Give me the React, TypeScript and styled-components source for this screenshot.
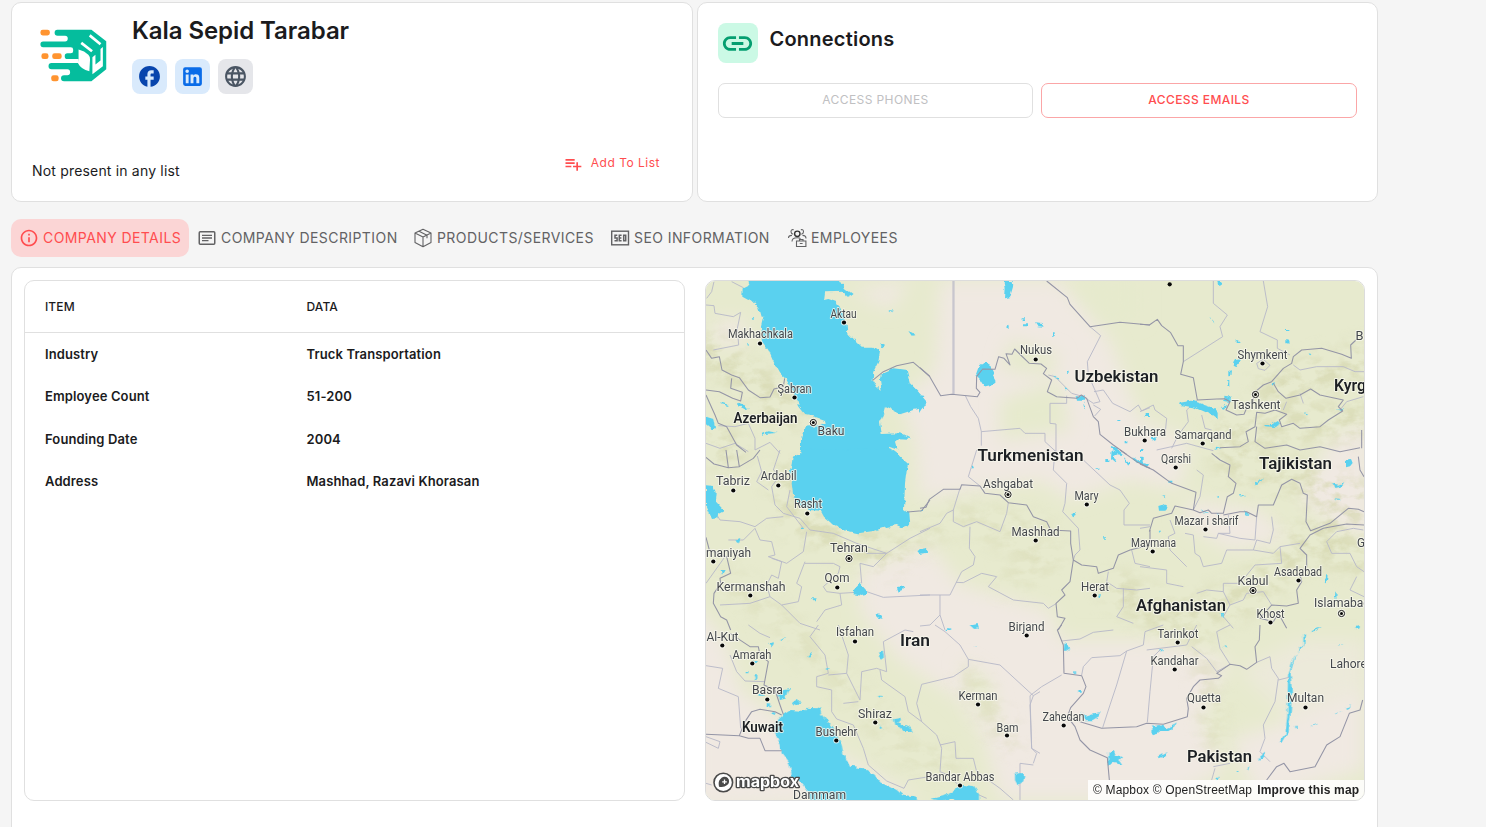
import React from 'react';
import styled, { createGlobalStyle } from 'styled-components';
import { MdFacebook, MdLanguage, MdLink, MdPlaylistAdd, MdInfoOutline } from 'react-icons/md';

const GlobalStyle = createGlobalStyle`
  *, *::before, *::after { box-sizing: border-box; }
  body { margin: 0; background: #f5f5f5; color: #1b1b1d; font-family: Inter, sans-serif; }
  button { font-family: inherit; }
`;

const Page = styled.main`
  height: 827px;
  overflow: hidden;
  padding: 2px 108px 0 11px;
  display: flex;
  flex-direction: column;
`;
const TopCards = styled.section`
  display: grid;
  grid-template-columns: 682px 681px;
  gap: 4px;
`;
const Card = styled.div`
  height: 200px;
  background: #fff;
  border: 1px solid #e0e0e0;
  border-radius: 10px;
  padding: 0 20px;
  display: flex;
  flex-direction: column;
`;
const Profile = styled.div`
  display: flex;
  padding-top: 12px;
  gap: 26px;
`;
const LogoBox = styled.div`
  width: 74px;
  padding: 14px 0 0 7.5px;
`;
const CompanyName = styled.h1`
  margin: 0;
  font-size: 24px;
  line-height: 32px;
  font-weight: 600;
  letter-spacing: -0.07px;
`;
const Socials = styled.div`
  display: flex;
  gap: 8px;
  margin-top: 12px;
`;
const Social = styled.a<{ $bg: string; $fg: string }>`
  width: 35px;
  height: 35px;
  border-radius: 8px;
  display: grid;
  place-items: center;
  background: ${p => p.$bg};
  color: ${p => p.$fg};
`;
const ListRow = styled.div`
  margin-top: auto;
  height: 50px;
  margin-bottom: 5px;
  display: flex;
  justify-content: space-between;
`;
const ListStatus = styled.span`
  font-size: 14px;
  line-height: 20px;
  letter-spacing: 0.18px;
  padding-top: 15px;
`;
const AddButton = styled.button`
  display: flex;
  align-items: center;
  gap: 8px;
  align-self: flex-start;
  height: 24px;
  margin-top: 4px;
  border: 0;
  padding: 0 12px 0 0;
  background: none;
  color: #ff4d4f;
  font-size: 12px;
  letter-spacing: 0.5px;
  svg { margin-top: 3px; }
`;
const ConnectionsHead = styled.div`
  display: flex;
  align-items: flex-start;
  gap: 11.5px;
  padding-top: 20px;
`;
const LinkBadge = styled.span`
  width: 40px;
  height: 40px;
  padding-right: 1px;
  border-radius: 8px;
  background: #cbf9e5;
  color: #059e70;
  display: grid;
  place-items: center;
`;
const CardTitle = styled.h2`
  margin: 0;
  font-size: 20px;
  line-height: 32px;
  font-weight: 600;
  letter-spacing: 0.22px;
`;
const AccessRow = styled.div`
  display: grid;
  grid-template-columns: 315px 316px;
  gap: 8px;
  margin-top: 20px;
`;
const AccessButton = styled.button<{ $active?: boolean }>`
  height: 35px;
  padding: 0 0 3px;
  border-radius: 7px;
  border: 1px solid ${p => (p.$active ? '#fba6a7' : '#e0e0e0')};
  background: #fff;
  color: ${p => (p.$active ? '#ff4d4f' : '#c0c0c2')};
  font-size: 12px;
  font-weight: ${p => (p.$active ? 500 : 400)};
  letter-spacing: 0.4px;
`;

const Tabs = styled.nav`
  display: flex;
  flex: none;
  margin: 17px 0 10px;
  height: 38px;
`;
const Tab = styled.button<{ $active?: boolean; $width: number }>`
  width: ${p => p.$width}px;
  display: flex;
  align-items: center;
  gap: 4px;
  padding: 0 0 1px 8px;
  border: 0;
  border-radius: 10px;
  white-space: nowrap;
  background: ${p => (p.$active ? '#fbd5d5' : 'transparent')};
  color: ${p => (p.$active ? '#ff4d4f' : '#626264')};
  font-size: 14px;
  letter-spacing: 0.42px;
  svg { flex: none; margin-top: 1px; }
`;

const Panel = styled.section`
  width: 1367px;
  height: 600px;
  flex: none;
  background: #fff;
  border: 1px solid #e0e0e0;
  border-radius: 10px;
  padding: 12px;
  display: flex;
  align-items: flex-start;
  gap: 20px;
`;
const TableCard = styled.div`
  width: 661px;
  height: 521px;
  border: 1px solid #e0e0e0;
  border-radius: 10px;
`;
const Table = styled.table`
  width: 100%;
  border-collapse: collapse;
  text-align: left;
  font-size: 13px;
  th { height: 51px; padding: 1px 0 0 20px; font-size: 12px; font-weight: 500; border-bottom: 1px solid #e0e0e0; letter-spacing: 0.1px; }
  td { height: 42.7px; padding: 0 0 0 20px; font-weight: 600; letter-spacing: 0.12px; }
  th:first-child { width: 261.5px; }
`;
const MapCard = styled.div`
  position: relative;
  width: 660px;
  height: 521px;
  border: 1px solid #dcdcdc;
  border-radius: 10px;
  overflow: hidden;
  svg { display: block; }
`;
const Attribution = styled.div`
  position: absolute;
  right: 0;
  bottom: 0;
  height: 20px;
  width: 276px;
  padding-left: 5px;
  background: rgba(255, 255, 255, 0.85);
  font: 12px/20px "Liberation Sans", Arial, sans-serif;
  color: #222;
  white-space: nowrap;
  display: flex;
  gap: 5px;
  letter-spacing: 0.17px;
`;

const Logo = () => (
  <svg width="67" height="53" viewBox="119 88 198 157">
    <path fill="#05bd9d" d="M170 90H271L315 124V207L271 243H190q-9 0-9-9t9-9h10q8 0 8-9t-8-9h-47q-9 0-9-9t9-9h80V177h-33q-8 0-8-8.500t8-8.500h10q7 0 7-7v-4q0-7-7-7H128q-8 0-8-8.500t8-8.500h65q8 0 8-8.500t-8-8.500h-22q-9 0-9-9t8-9z" />
    <path fill="#fff" d="M233 149q18 4 29 15 5 5 5 14l-2 35q-25-5-34-24l2-12zM274 172l9-8v29l15-12v-34l7-6v57l-31 24z" />
    <path stroke="#fff" strokeWidth="8" d="M241 129L273 154M266 107L298 133" />
    <g fill="#ff9430"><rect x="120" y="90" width="28" height="17" rx="7" /><rect x="123" y="160" width="21" height="17" rx="7" /><rect x="155" y="160" width="28" height="17" rx="7" /><rect x="152" y="225" width="22" height="18" rx="7" /></g>
  </svg>
);
const LinkedIn = () => (
  <svg width="25" height="25" viewBox="0 0 24 24" fill="currentColor"><path d="M19 3a2 2 0 0 1 2 2v14a2 2 0 0 1-2 2H5a2 2 0 0 1-2-2V5a2 2 0 0 1 2-2h14m-.5 15.5v-5.3a3.26 3.26 0 0 0-3.26-3.26c-.85 0-1.84.52-2.320 1.300v-1.110h-2.790v8.370h2.790v-4.930c0-.77.62-1.400 1.390-1.400a1.400 1.400 0 0 1 1.400 1.400v4.930h2.790M6.880 8.560a1.680 1.680 0 0 0 1.680-1.680c0-.93-.75-1.690-1.680-1.690a1.690 1.690 0 0 0-1.690 1.690c0 .93.76 1.680 1.690 1.680m1.390 9.940v-8.370H5.500v8.370h2.770z" /></svg>
);
const DescriptionIcon = () => (
  <svg width="20" height="20" viewBox="0 0 20 20" fill="none" stroke="currentColor" strokeWidth="1.500"><rect x="2.250" y="3.700" width="15.500" height="12.600" rx="1" /><path d="M5 7.300h10M5 10h10M5 12.700h6.500" strokeWidth="1.300" /></svg>
);
const BoxIcon = () => (
  <svg width="20" height="20" viewBox="0 0 20 20" fill="none" stroke="currentColor" strokeWidth="1.100" strokeLinejoin="round"><path d="M10 1.300L18 5v9.500l-8 4.200-8-4.200V5zM2 5l8 4 8-4M10 9v9.700M6 3.200l8 4v3" /></svg>
);
const SeoIcon = () => (
  <svg width="20" height="20" viewBox="0 0 20 20" fill="none" stroke="currentColor" strokeWidth="1.400"><rect x="1.700" y="3.200" width="16.800" height="13.600" /><path d="M7.300 7.200H5v2.700h2.100v2.900H4.500M11.600 7.200H9.300v5.600h2.300M9.300 10h2.100M13.700 7.200h2v5.600h-2z" strokeWidth="1.500" /></svg>
);
const EmployeesIcon = () => (
  <svg width="20" height="20" viewBox="0 0 20 20" fill="none" stroke="currentColor" strokeWidth="1.100"><circle cx="10.300" cy="5.800" r="2.700" stroke="#333" strokeWidth="1.400" /><path d="M6.700 1.800Q4 1 4 3.700q0 2 2.200 2.500M13.800 1.800q2.700-.8 2.700 1.900 0 2-2.200 2.500M1.500 10q0-2.600 3.500-2.600M15.500 7.400q3.500 0 3.500 3M5 13.500q0-3.800 5.200-3.800 2.500 0 3.300 1M9.500 13h9.400v5.500H9.500zM12.500 13v-1.500h3.500V13M12.800 15.500h2.800" /></svg>
);

interface Tile { x: number; y: number; water?: string; border?: string; admin?: string; }

/* Each sheet of map geometry is drawn at three units per pixel from its own origin. */
const tiles: Tile[] = [
  {
    x: 700, y: 275,
    water: 'M145 15L148 30 128 40 127 65 145 75 152 72 165 85 178 100 185 125 190 125 183 155 190 205 205 225 218 255 240 295 260 315 275 345 290 365 298 395 318 420 345 425 372 435 374 444 360 450 315 455 303 490 302 545 570 545 567 515 595 525 588 500 600 490 633 492 600 475 545 477 540 440 550 415 555 395 600 418 640 405 670 400 680 380 655 350 630 325 620 285 580 280 555 290 542 300 540 315 545 348 530 335 518 315 520 290 535 260 540 230 520 215 485 215 470 200 458 185 443 185 440 150 425 110 410 80 385 72 372 75 375 52 430 50 442 65 458 57 435 40 420 15ZM18 425l25 8 5 25-12 5-18-15ZM115 380l22 8 12 14-10 3-24-13zM65 383l20 6v4l-20-5zM186 476l20-7 28 5-40 3-8 6zM625 168l12 5 6 8-8 1zM540 205l16 8-10 7zM565 105l17 2-8 5zM155 125l8 4-5 4zM138 205l6 0-3 8z',
    border: 'M18 225L35 250 58 245 66 285 95 300 118 308 145 345 180 368 210 366 222 342 250 335 254 310M18 345L58 350 98 370 122 378 127 352 92 340 95 310M18 360L45 420 55 445 80 455 110 510 138 532M518 316L550 290 590 272 640 262 690 305',
    admin: 'M18 90L42 92 45 115 100 125 122 112 112 160 116 210 40 225M42 20L35 50 20 70M95 20L130 38M55 452L105 455 145 445 165 490 165 525 210 502 240 535M18 505L60 520 105 505 145 530'
  },
  {
    x: 920, y: 275,
    water: 'M250 18h28l2 14-10 34-18 4 2-30zM181 270l15-9 16 10 4 18 14 27-14 13-25 6-14-22-8-10zM348 142l16 2 7 11-15-1zM260 153l8-4 2 10zM305 130h10v6h-10zM306 148h18v6h-18zM396 175h5v10h-5zM438 287h8v6h-8zM400 298l18 15-3 4zM470 360l24 3-2 14-18 0zM490 385l8 18-6-3zM0 358l18 28-18 28zM575 515l18 8 20 18-28-4zM677 417h13v9h-13zM592 436h9v5h-9zM614 498h8v7h-8zM0 610zM434 340l10 4-8 2z',
    border: 'M0 278L28 303 62 362 95 358 172 365 180 352 169 340 170 305 188 282 225 283 236 245 252 250 270 270 258 236 276 238 284 222 302 240 328 265 363 267 380 280 370 296 395 315 382 350 410 365 470 370 484 360 500 370 520 425 535 440 540 478 580 510 620 538M380 18L442 68 450 88 510 155 600 142 690 150',
    admin: 'M99 18V358M102 18V358M136 362L152 395 175 430 184 470 184 512M184 470L300 460 315 475 375 475 375 500 408 530 408 447 390 445 390 385 440 385 440 362M510 155L542 182 502 260 505 300 540 380 520 385 490 365 455 355 405 305 385 300M522 350L550 345 578 385 630 410 655 390 665 408 690 398M520 390l22 13-18 20'
  },
  {
    x: 1140, y: 275,
    water: 'M115 384l40-7 65 22 13 14v20l-18-14-48-21-48-8zM285 252l15-4 2 8-12 20-12-3 2-12zM205 126l14 10 4 8-10-8zM232 18h12v10l-8 5zM290 196h8v8h-8zM438 162h10v6h-10zM439 192l8 2 2 12-10-1zM502 234l12 3-3 4zM265 288l8-2-2 18h-6zM262 315h6v20h-6zM253 365l20 3-2 13-18-3zM242 398l18-9-8 12zM395 325l10-3-3 10zM372 450l20 0 22-12 6 9-20 9-24-2zM18 418h12v8H18zM36 485l16 3-7 10-8-5zM495 412l10 5-6 4zM590 404l22-2-6 6zM0 522h10v6H0zM220 518l25 2-20 4z',
    border: 'M0 148L28 150 52 133 65 152 92 173 114 212 130 212 130 260 122 298 160 308 172 375 230 372 254 371 270 380 258 405 290 420 312 418 325 388 340 380 340 355 370 330 395 320 430 280 455 265 460 245 485 225 545 220 605 238 634 250 632 210 648 195M400 325L415 350 438 370 480 360 512 342 540 360 610 375 595 395 608 408 565 435 540 455 480 460 460 445 425 455 418 435 440 418 405 405 375 415 350 412 345 455 318 470 325 500 300 515 240 518M375 520L345 500 350 455M375 520L440 510 480 525 540 515 600 530 660 518M665 465L665 520',
    admin: 'M220 18V85L262 120 240 155 248 185 130 260M370 18L383 95 360 170 412 195 412 220 450 240M460 270l20 15 50-10 80 0 35 15 28 0M172 375L140 405 145 440 115 480 95 520M185 420L195 460 215 465M0 410L40 390 45 405 80 430 75 480M350 265l20-12 20 18-15 15-20-5zM440 380l-10 25M480 355l10 30M50 525l90-20 80 22M600 405l20-25 50-15'
  },
  {
    x: 700, y: 450,
    water: 'M302 0L300 12 278 20 275 40 270 62 280 75 275 100 280 140 298 165 330 180 362 182 372 200 400 225 440 243 475 250 520 243 560 230 590 225 610 235 628 228 625 190 612 180 615 100 620 60 625 42 605 25 590 10 570 -5ZM18 106l22 2 7 22-2 22 28 30-18 10-3 13-16 2-18-42zM480 400l18 20 0 15-15 3-23-5 2-14zM655 303l12-7 20 4-8 8-20 0zM590 410l22 0-2 10-14 5zM528 493l12 1 8 12-12-1zM108 268l10-4-4 14zM62 360l12 0-8 14zM335 445h12l-4 8zM303 233h8v4h-8z',
    border: 'M18 22L42 42 85 53 78 0M85 53L118 50 110 0M118 50L160 25 180 0M18 262L28 300 80 320 92 370 60 385 62 400 42 430 40 460 62 500 80 510 92 540M622 186L665 182 690 150',
    admin: 'M240 0L220 60 240 75 215 110 225 165 250 190 300 205 330 240 400 250 470 280 560 310 630 265 690 235M172 18L185 65 170 95 205 120M270 120L260 170 310 235M35 170L60 210 120 215 165 230 200 205 250 200M85 270L130 270 165 235 180 270 215 275 225 315 205 320 260 340 310 305 320 245M18 400L75 320M215 325L245 335 235 385 215 375 200 405 210 440 150 460 60 465M210 440L245 465 295 455 305 410 290 400 315 335M315 340L400 340 420 350 415 370 370 410 380 425 420 430 425 465 375 480 350 515M420 430L500 425 550 442 690 435M470 280L500 310 560 310 520 350 480 340 485 400M245 465L300 520 360 540'
  },
  {
    x: 920, y: 450,
    water: 'M0 298l20-4 7 8-8 6-19 4zM457 192l10-2 3 8-8 4zM153 47h8v8h-8zM535 434l8-2-6 13zM550 262h8v4h-8zM155 526l18-4 4 16-10-8zM575 0l16 15-10 5 10 20-18-15zM610 20l20 20-4 10zM640 18l25 20 20 5-5 10-30-15zM556 30h12v6h-12zM2 180h7v6H2zM530 55h8v4h-8z',
    border: 'M0 175L18 172 28 148 70 118 120 118 125 104 180 108 195 130 240 135 265 158 320 165 340 200 380 215 392 240 452 243 452 280 460 330 450 395 425 420 435 435 408 460 412 500 435 505 415 540M460 330L485 345 530 350 535 370 580 355 595 315 630 300 690 285 690 240M600 0L650 35 690 55',
    admin: 'M170 0L145 80 180 108M100 180L100 215 130 230 170 215 240 245 260 190 265 158M150 230L148 295 165 320 160 345 125 365 90 435 0 435M0 245L60 220 80 190 100 180 120 115M108 397L130 398 185 370 230 380 205 410 280 450 370 460 385 475 410 460M60 435L60 495 30 525 0 528M60 495L75 540M490 30L570 105 600 120 628 160 612 180 612 225 690 225M405 0L400 60 440 100 435 160 428 185 475 235 480 300 465 315 460 330M565 365L560 395 590 415 650 420 690 415M610 415L610 470 590 500 640 520M635 300L645 340 690 350'
  },
  {
    x: 1140, y: 450,
    water: 'M618 30l15-3 5 12-8 10-12 3zM572 103l20 4 18-7-8 10-16 4zM345 95l10 3 18-18-15 22-12 4zM55 168l12-4 16 8-10 10-16 0zM230 137l10-2-2 8zM300 139l18-2-16 6zM65 137h8l3 8zM85 92h12v6H85zM585 145l14 2-5 3zM562 376h4l-3 18-10 8zM586 425h4l-1 28-4-8zM53 242h10l-6 8zM242 492h7l-2 14zM0 20h8v20H0zM185 178l20 12-12-3zM230 188l12 8-8 2zM315 184l15 10-10 0zM530 535l10-4z',
    border: 'M0 42L40 60 95 100 168 127 160 180 180 188 205 180 215 190 250 190 262 140 280 130 288 100 265 80 270 45 240 30 215 10M0 225M28 245L40 205 95 190 105 168 160 180M250 195L300 185 320 185 350 200 355 165 400 165 425 105 455 88 480 100 490 130 502 135 498 215 512 242 570 220 625 175 655 178 672 185M672 225L620 222 550 235 510 255 480 295 500 315 500 350 480 375 485 395 470 420 475 460 440 468 395 465M395 465L360 505 400 515 415 490 440 535M655 20L660 60 672 80',
    admin: 'M0 350L80 360 80 400 130 410M90 210L105 250 85 260 90 300 140 350M135 250L160 255 165 310 180 320 190 350M190 260L230 265 235 250 270 250 265 195M235 250L300 265 345 270 350 200M190 350L245 340 260 300 340 300 350 270 390 280 400 240 395 200M340 300L400 310 420 290 480 280M420 290L425 340 345 345 300 400 250 400M170 430L200 420 250 425 250 400M250 425L270 465 310 450 320 430 370 425 395 465M270 465L250 500 280 535M0 235L30 230M160 180L180 140 190 75 170 60M560 275L590 245 640 235 670 240M560 275L575 310 630 310 650 350 672 365M650 380L630 420 672 440'
  },
  {
    x: 700, y: 625,
    water: 'M252 268L272 255 310 258 320 248 350 250 360 243 364 268 400 310 425 360 430 385 450 425 490 430 525 450 530 465 590 495 610 512 650 518 652 530H330L325 500 300 470 275 450 268 415 245 385 235 345 222 320 228 290ZM692 522l40-10 25-10 30-22 35 3 15 22v25H770L760 522l-40 4zM538 82l14-2 3 14-12 10-6-6zM945 446l20-2 8 8-5 22-15 6-8-14zM582 282l22-4 2 8-12 6 30 12 14 16-22 2-12-14-18-8zM538 298l12 12-10 2zM532 212h14l-4 8zM275 235l18-14 8 12-18 10zM250 192l22-3-10 12-6 20-20 5-2-20zM200 235h10v12h-10zM210 265l14-4 4 10zM175 210h18v5h-18zM205 55l18-8-10 18zM240 45l18-6-10 10zM322 92l14-15-6 18zM378 130h10v4h-10zM140 138h8v7h-8zM160 148h12v16h-6zM160 105l18 6-15 4zM812 0h15l8 10-10 2zM740 10h10v5h-10zM825 60h8v4h-8z',
    border: 'M90 25L150 65 175 65 180 90 205 110 192 180 225 195 240 240 250 268M18 328L118 332 145 340 180 340 195 377 245 377M118 332L135 290 155 260 180 253 225 260 245 270',
    admin: 'M18 122L68 130 55 190 115 215 122 310M90 90L110 140 135 168 195 170M18 335L60 350 55 370 18 352M18 475L35 480M145 0L180 25 210 38M355 0L330 35 375 90 385 145 350 155 350 185 395 195 395 260 410 282 460 300 490 370 505 420 560 468 612 490 625 465 720 450M415 0L445 90 440 145 385 150M440 145L480 225 485 140 530 130 560 140 550 50 615 15 640 20M430 235L475 230M540 135L545 165 615 215 625 260 665 290 710 330 725 370 720 440 745 450 780 485 860 520M805 103L805 125 760 155 665 178 650 235 665 290M805 103L900 120 1000 212 990 240 995 370 1020 385M705 0L735 20 780 60 805 103M1000 212L1020 200M720 360L765 350 768 400 820 400 830 440 900 490 940 525M960 525L960 415 1000 420'
  },
  {
    x: 1030, y: 625,
    water: 'M103 55l10 4 8 10-12 8-8 0zM132 136h6v12h-6zM145 195h10v8h-10zM150 262l20 10 25-8 16-2-4 12-20 12-22 0zM367 304l25-4 15 10 20-8 10-14-3 15-18 15-26 0-5 8-18 5zM235 385l15-8 8 12 18 8-8 8 10 14-30-5-14 7zM386 395l26-14-6 12-18 7zM820 30l8-2-2 30-14 6-18 35-12 45 4 60-4 65-6 50-18 30-12 3 20-25 6-55 2-120 18-55 28-35zM845 18l20-8 10 0-28 12zM580 62l8-2 0 8zM390 75l10-3-5 8zM690 395l18-14-6 16-18 8zM650 428l8-4-4 14zM560 455h8v10h-8zM620 435h5v6h-5zM793 302h4v8h-4zM845 303l25-9-20 10zM915 266l20-8-16 10zM945 248l22-8-18 12zM925 60l12-3-10 6zM972 8l12-5 4 8-12 2z',
    border: 'M95 0L82 15 100 60 102 145 155 152 168 185 160 205 122 248 112 275 135 305 150 345 180 375 232 398 238 465M112 275L155 292 215 310 320 305 350 295 400 298 472 275 475 250 470 220 490 185 510 165 565 160 575 152 560 145 600 118 630 122 650 133 680 112 675 65 688 45 690 0M710 465L740 425 762 415 780 440 855 425 890 360 930 335 958 265 990 255 998 225',
    admin: 'M95 48L150 42 190 22 250 15M95 150L35 185 0 212M155 150L160 125 185 98 270 92 290 78 340 60 345 20 400 0M290 78L260 180 240 240 218 308M390 75L370 95 360 200 352 292M485 65L530 100 560 140 600 118 570 70 560 20 600 0M680 112L720 95 725 130 745 160 735 230 700 300 705 340 690 380 720 410M745 165L785 155M0 212L5 370 20 385 10 415M350 75L470 60 500 0M550 425L600 415M545 465L555 430'
  }
];

type Kind = 'country' | 'city' | 'capital';
interface Place { name: string; x: number; y: number; w: number; size?: number; kind?: Kind; dot?: [number, number]; }
const places: Place[] = [
  { name: 'Aktau', x: 843.5, y: 318, w: 26, dot: [844, 322.5] },
  { name: 'Makhachkala', x: 760.5, y: 338, w: 65, dot: [760, 343.5] },
  { name: 'Şabran', x: 794.5, y: 393, w: 34, dot: [794.5, 397.5] },
  { name: 'Azerbaijan', x: 765.5, y: 422.500, w: 64, size: 14, kind: 'country' },
  { name: 'Baku', x: 831, y: 435, w: 27, size: 12.5, kind: 'capital', dot: [813.300, 422.500] },
  { name: 'Nukus', x: 1036, y: 354, w: 32, dot: [1035.700, 359.500] },
  { name: 'Uzbekistan', x: 1116.500, y: 382, w: 84, size: 17, kind: 'country' },
  { name: 'Shymkent', x: 1262.500, y: 358.500, w: 50, dot: [1262.500, 363.500] },
  { name: 'Kyrg', x: 1350, y: 391, w: 32, size: 17, kind: 'country' },
  { name: 'B', x: 1359.500, y: 340, w: 8 },
  { name: 'Tashkent', x: 1256, y: 409, w: 49, size: 12.500, kind: 'capital', dot: [1255.500, 394.500] },
  { name: 'Bukhara', x: 1145, y: 435.500, w: 42, dot: [1144.700, 440.500] },
  { name: 'Samarqand', x: 1203, y: 438.500, w: 57, dot: [1202.700, 443.500] },
  { name: 'Turkmenistan', x: 1030.500, y: 461, w: 106, size: 17, kind: 'country' },
  { name: 'Qarshi', x: 1176, y: 463, w: 30, dot: [1175.700, 467.500] },
  { name: 'Tajikistan', x: 1295.500, y: 469, w: 73, size: 17, kind: 'country' },
  { name: 'Tabriz', x: 733, y: 484.500, w: 34, dot: [733.300, 490.500] },
  { name: 'Ardabil', x: 778.500, y: 480, w: 36, dot: [778.300, 485.500] },
  { name: 'Rasht', x: 808, y: 508, w: 28, dot: [807.300, 513.500] },
  { name: 'Ashgabat', x: 1008, y: 487.500, w: 50, size: 12.500, kind: 'capital', dot: [1008, 494.500] },
  { name: 'Mary', x: 1086.500, y: 499.500, w: 24, dot: [1086.800, 504.500] },
  { name: 'Mazar i sharif', x: 1206.500, y: 524.500, w: 64, dot: [1205.500, 529.500] },
  { name: 'Mashhad', x: 1035.500, y: 535.500, w: 48, size: 12.500, dot: [1035.700, 540.500] },
  { name: 'Maymana', x: 1153.500, y: 547, w: 45, dot: [1152.700, 551.500] },
  { name: 'Tehran', x: 849, y: 552, w: 38, size: 12.500, kind: 'capital', dot: [849, 558.500] },
  { name: 'maniyah', x: 728.500, y: 556.500, w: 45, dot: [713.300, 561.500] },
  { name: 'Kermanshah', x: 751, y: 590.500, w: 69, size: 12.500, dot: [750.300, 595.500] },
  { name: 'Qom', x: 837, y: 581.500, w: 25, size: 12.500, dot: [837.300, 587.500] },
  { name: 'Herat', x: 1095, y: 590.500, w: 28, dot: [1094.700, 595.500] },
  { name: 'Asadabad', x: 1298, y: 576, w: 48, dot: [1298.500, 580.500] },
  { name: 'Kabul', x: 1253, y: 584.500, w: 31, size: 12.500, kind: 'capital', dot: [1253, 590.500] },
  { name: 'G', x: 1361, y: 546.500, w: 8 },
  { name: 'Afghanistan', x: 1181, y: 611, w: 90, size: 17, kind: 'country' },
  { name: 'Islamabad', x: 1342, y: 607, w: 56, size: 12.500, kind: 'capital', dot: [1341.500, 613.500] },
  { name: 'Khost', x: 1270.500, y: 618, w: 28, dot: [1270.500, 622.500] },
  { name: 'Al-Kut', x: 722.500, y: 641, w: 32, dot: [722.300, 645.500] },
  { name: 'Isfahan', x: 855, y: 635.500, w: 38, size: 12.500, dot: [855, 641.500] },
  { name: 'Iran', x: 915, y: 645.500, w: 30, size: 17, kind: 'country' },
  { name: 'Birjand', x: 1026.500, y: 631, w: 36, dot: [1026.700, 635.500] },
  { name: 'Tarinkot', x: 1178, y: 637.500, w: 41, dot: [1177.700, 642.500] },
  { name: 'Amarah', x: 752, y: 658.500, w: 39, dot: [752.300, 663.500] },
  { name: 'Kandahar', x: 1174.500, y: 664.500, w: 48, dot: [1174.700, 669.500] },
  { name: 'Lahore', x: 1348.500, y: 668, w: 37, size: 12.500 },
  { name: 'Basra', x: 767.500, y: 694, w: 31, size: 12.500, dot: [767.300, 699.500] },
  { name: 'Kerman', x: 978, y: 700, w: 39, dot: [978, 704.500] },
  { name: 'Quetta', x: 1204, y: 702, w: 34, size: 12.500, dot: [1203.500, 707.500] },
  { name: 'Multan', x: 1305.500, y: 702, w: 37, size: 12.500, dot: [1305.500, 707.500] },
  { name: 'Shiraz', x: 875, y: 717.500, w: 34, size: 12.500, dot: [875.300, 722.500] },
  { name: 'Kuwait', x: 762.500, y: 731.500, w: 41, size: 14, kind: 'country' },
  { name: 'Zahedan', x: 1063.500, y: 721, w: 42, dot: [1063.700, 725.500] },
  { name: 'Bushehr', x: 836.500, y: 735.500, w: 42, dot: [836.300, 740.500] },
  { name: 'Bam', x: 1007.500, y: 731.500, w: 22, dot: [1007, 735.500] },
  { name: 'Pakistan', x: 1219.500, y: 761.500, w: 65, size: 17, kind: 'country' },
  { name: 'Bandar Abbas', x: 960, y: 780.500, w: 69, dot: [960, 785.500] },
  { name: 'Dammam', x: 819.500, y: 799, w: 53, size: 12.500 }
];

const PlaceLabel = styled.text<{ $country: boolean; $size: number }>`
  font-family: Roboto, sans-serif;
  font-size: ${p => p.$size}px;
  font-weight: ${p => (p.$country ? 600 : 400)};
  fill: ${p => (p.$country ? '#1d2024' : '#44474c')};
  stroke: rgba(247, 247, 237, 0.8);
  stroke-width: 2px;
  stroke-linejoin: round;
  paint-order: stroke;
  text-anchor: middle;
`;

const PlaceMark = ({ place }: { place: Place }) => (
  <g>
    {place.dot && (
      <>
        <circle cx={place.dot[0]} cy={place.dot[1]} r={place.kind === 'capital' ? 4.500 : 3} fill="#f7f7f0" opacity="0.800" />
        {place.kind === 'capital' && <circle cx={place.dot[0]} cy={place.dot[1]} r="3.100" fill="none" stroke="#1b1b1b" strokeWidth="1" />}
        <circle cx={place.dot[0]} cy={place.dot[1]} r={place.kind === 'capital' ? 1.500 : 2.100} fill="#080808" />
      </>
    )}
    <PlaceLabel $country={place.kind === 'country'} $size={place.size ?? 12} x={place.x} y={place.y} textLength={place.w} lengthAdjust="spacingAndGlyphs">{place.name}</PlaceLabel>
  </g>
);

const RegionMap = () => (
  <svg width="658" height="519" viewBox="706 281 658 519">
    <defs>
      <filter id="cover" x="-20%" y="-20%" width="140%" height="140%"><feGaussianBlur stdDeviation="9" /></filter>
      <filter id="relief" x="0" y="0" width="100%" height="100%">
        <feTurbulence type="fractalNoise" baseFrequency="0.05 0.08" numOctaves="4" seed="8" />
        <feColorMatrix values="0 0 0 0 0.66  0 0 0 0 0.67  0 0 0 0 0.42  3.800 0 0 0 -1.600" />
      </filter>
      <filter id="coast" filterUnits="userSpaceOnUse" x="700" y="275" width="670" height="531" colorInterpolationFilters="sRGB">
        <feTurbulence type="fractalNoise" baseFrequency="0.16" numOctaves="2" seed="3" result="noise" />
        <feDisplacementMap in="SourceGraphic" in2="noise" scale="5" xChannelSelector="R" yChannelSelector="G" />
      </filter>
      <mask id="ranges">
        <g filter="url(#cover)" fill="none" stroke="#fff" strokeLinecap="round">
          <path strokeWidth="34" d="M706 350L760 385 790 410M706 440L730 450M785 480L800 520 845 540 890 555M1270 390L1364 360M1230 430L1364 420M1230 460L1364 500 1240 600 1170 620 1120 590M1300 540L1364 560" />
          <path strokeWidth="22" opacity=".65" d="M730 580L780 620 850 690 900 750 950 765M890 555L960 515 1050 560 1010 580M970 680L1010 740M1200 640L1215 740M960 515L1040 530" />
        </g>
      </mask>
    </defs>
    <rect x="705" y="280" width="660" height="521" fill="#e7eace" />
    <g fill="#f0e9e2" filter="url(#cover)">
      <path d="M940 280L1060 280 1110 340 1140 420 1190 440 1180 490 1130 480 1070 500 1040 480 920 500 915 440 900 400 935 370z" />
      <path d="M860 570L930 545 960 585 1050 610 1060 640 1150 640 1230 660 1200 720 1225 770 1170 800 1000 800 985 740 960 700 900 660 860 610z" />
      <path d="M690 600L725 640 740 690 780 720 850 760 920 800 690 810z" />
      <path d="M1290 720L1364 690 1364 770 1260 800 1230 740zM1330 440L1370 420 1370 540 1330 520 1300 500zM1190 500L1260 510 1290 540 1230 550 1180 520zM715 320L745 320 745 345 715 345zM850 290L910 280 890 310z" />
      <path opacity=".6" d="M1240 670L1300 640 1364 640 1364 690 1290 720z" />
    </g>
    <g fill="#e6eacd" filter="url(#cover)">
      <path d="M1000 400L1060 380 1070 430 1000 440zM1010 340L1060 355 1050 375 1000 370zM960 660L990 680 1000 730 975 710z" />
      <path d="M1075 280L1140 280 1140 320 1110 320z" />
    </g>
    <g mask="url(#ranges)"><rect x="705" y="280" width="660" height="521" filter="url(#relief)" opacity=".68" /></g>
    {tiles.map(t => (
      <g key={`a${t.x}-${t.y}`} transform={`translate(${t.x} ${t.y}) scale(0.333333)`} fill="none" strokeLinejoin="round">
        <path d={t.admin} stroke="#b8b9c8" strokeWidth="2.800" />
      </g>
    ))}
    <g filter="url(#coast)">
      {tiles.map(t => (
        <g key={`w${t.x}-${t.y}`} transform={`translate(${t.x} ${t.y}) scale(0.333333)`}>
          <path d={t.water} fill="#5ad1ef" />
        </g>
      ))}
    </g>
    {tiles.map(t => (
      <g key={`b${t.x}-${t.y}`} transform={`translate(${t.x} ${t.y}) scale(0.333333)`} fill="none" strokeLinejoin="round">
        <path d={t.border} stroke="#9495a6" strokeWidth="3.200" />
      </g>
    ))}
    <circle cx="1169.700" cy="284.300" r="2.100" fill="#080808" />
    {places.map(p => <PlaceMark key={p.name} place={p} />)}
    <g>
      <circle cx="723.300" cy="782.500" r="9.300" fill="#fff" stroke="#4a4a4a" strokeWidth="1.600" />
      <path d="M719 786.800q-1.200-5.500 1.500-7.800a4.600 4.600 0 1 1 6.200 6.300q-2.200 2.300-7.700 1.500z" fill="#4a4a4a" />
      <path d="M724.500 779.500v4.600M722.200 781.800h4.600" stroke="#fff" strokeWidth="1.300" />
      <text x="736" y="787" textLength="63" lengthAdjust="spacingAndGlyphs" fontFamily="Inter, sans-serif" fontSize="15" fontWeight="700" fill="#fff" stroke="#4a4a4a" strokeWidth="2.600" strokeLinejoin="round" paintOrder="stroke">mapbox</text>
    </g>
  </svg>
);

const details = [
  ['Industry', 'Truck Transportation'],
  ['Employee Count', '51-200'],
  ['Founding Date', '2004'],
  ['Address', 'Mashhad, Razavi Khorasan']
];

export default function App() {
  return (
    <>
      <GlobalStyle />
      <Page>
        <TopCards>
          <Card>
            <Profile>
              <LogoBox><Logo /></LogoBox>
              <div>
                <CompanyName>Kala Sepid Tarabar</CompanyName>
                <Socials>
                  <Social $bg="#d9eafc" $fg="#0845ad"><MdFacebook size={25} /></Social>
                  <Social $bg="#d9eafc" $fg="#0a6ce8"><LinkedIn /></Social>
                  <Social $bg="#e5e6ea" $fg="#4a5563"><MdLanguage size={25} /></Social>
                </Socials>
              </div>
            </Profile>
            <ListRow>
              <ListStatus>Not present in any list</ListStatus>
              <AddButton><MdPlaylistAdd size={20} />Add To List</AddButton>
            </ListRow>
          </Card>
          <Card>
            <ConnectionsHead>
              <LinkBadge><MdLink size={35} /></LinkBadge>
              <CardTitle>Connections</CardTitle>
            </ConnectionsHead>
            <AccessRow>
              <AccessButton disabled>ACCESS PHONES</AccessButton>
              <AccessButton $active>ACCESS EMAILS</AccessButton>
            </AccessRow>
          </Card>
        </TopCards>
        <Tabs>
          <Tab $active $width={178}><MdInfoOutline size={20} />COMPANY DETAILS</Tab>
          <Tab $width={216}><DescriptionIcon />COMPANY DESCRIPTION</Tab>
          <Tab $width={197}><BoxIcon />PRODUCTS/SERVICES</Tab>
          <Tab $width={177}><SeoIcon />SEO INFORMATION</Tab>
          <Tab $width={130}><EmployeesIcon />EMPLOYEES</Tab>
        </Tabs>
        <Panel>
          <TableCard>
            <Table>
              <thead><tr><th>ITEM</th><th>DATA</th></tr></thead>
              <tbody>{details.map(([item, data]) => <tr key={item}><td>{item}</td><td>{data}</td></tr>)}</tbody>
            </Table>
          </TableCard>
          <MapCard>
            <RegionMap />
            <Attribution><span>© Mapbox © OpenStreetMap</span><b>Improve this map</b></Attribution>
          </MapCard>
        </Panel>
      </Page>
    </>
  );
}
